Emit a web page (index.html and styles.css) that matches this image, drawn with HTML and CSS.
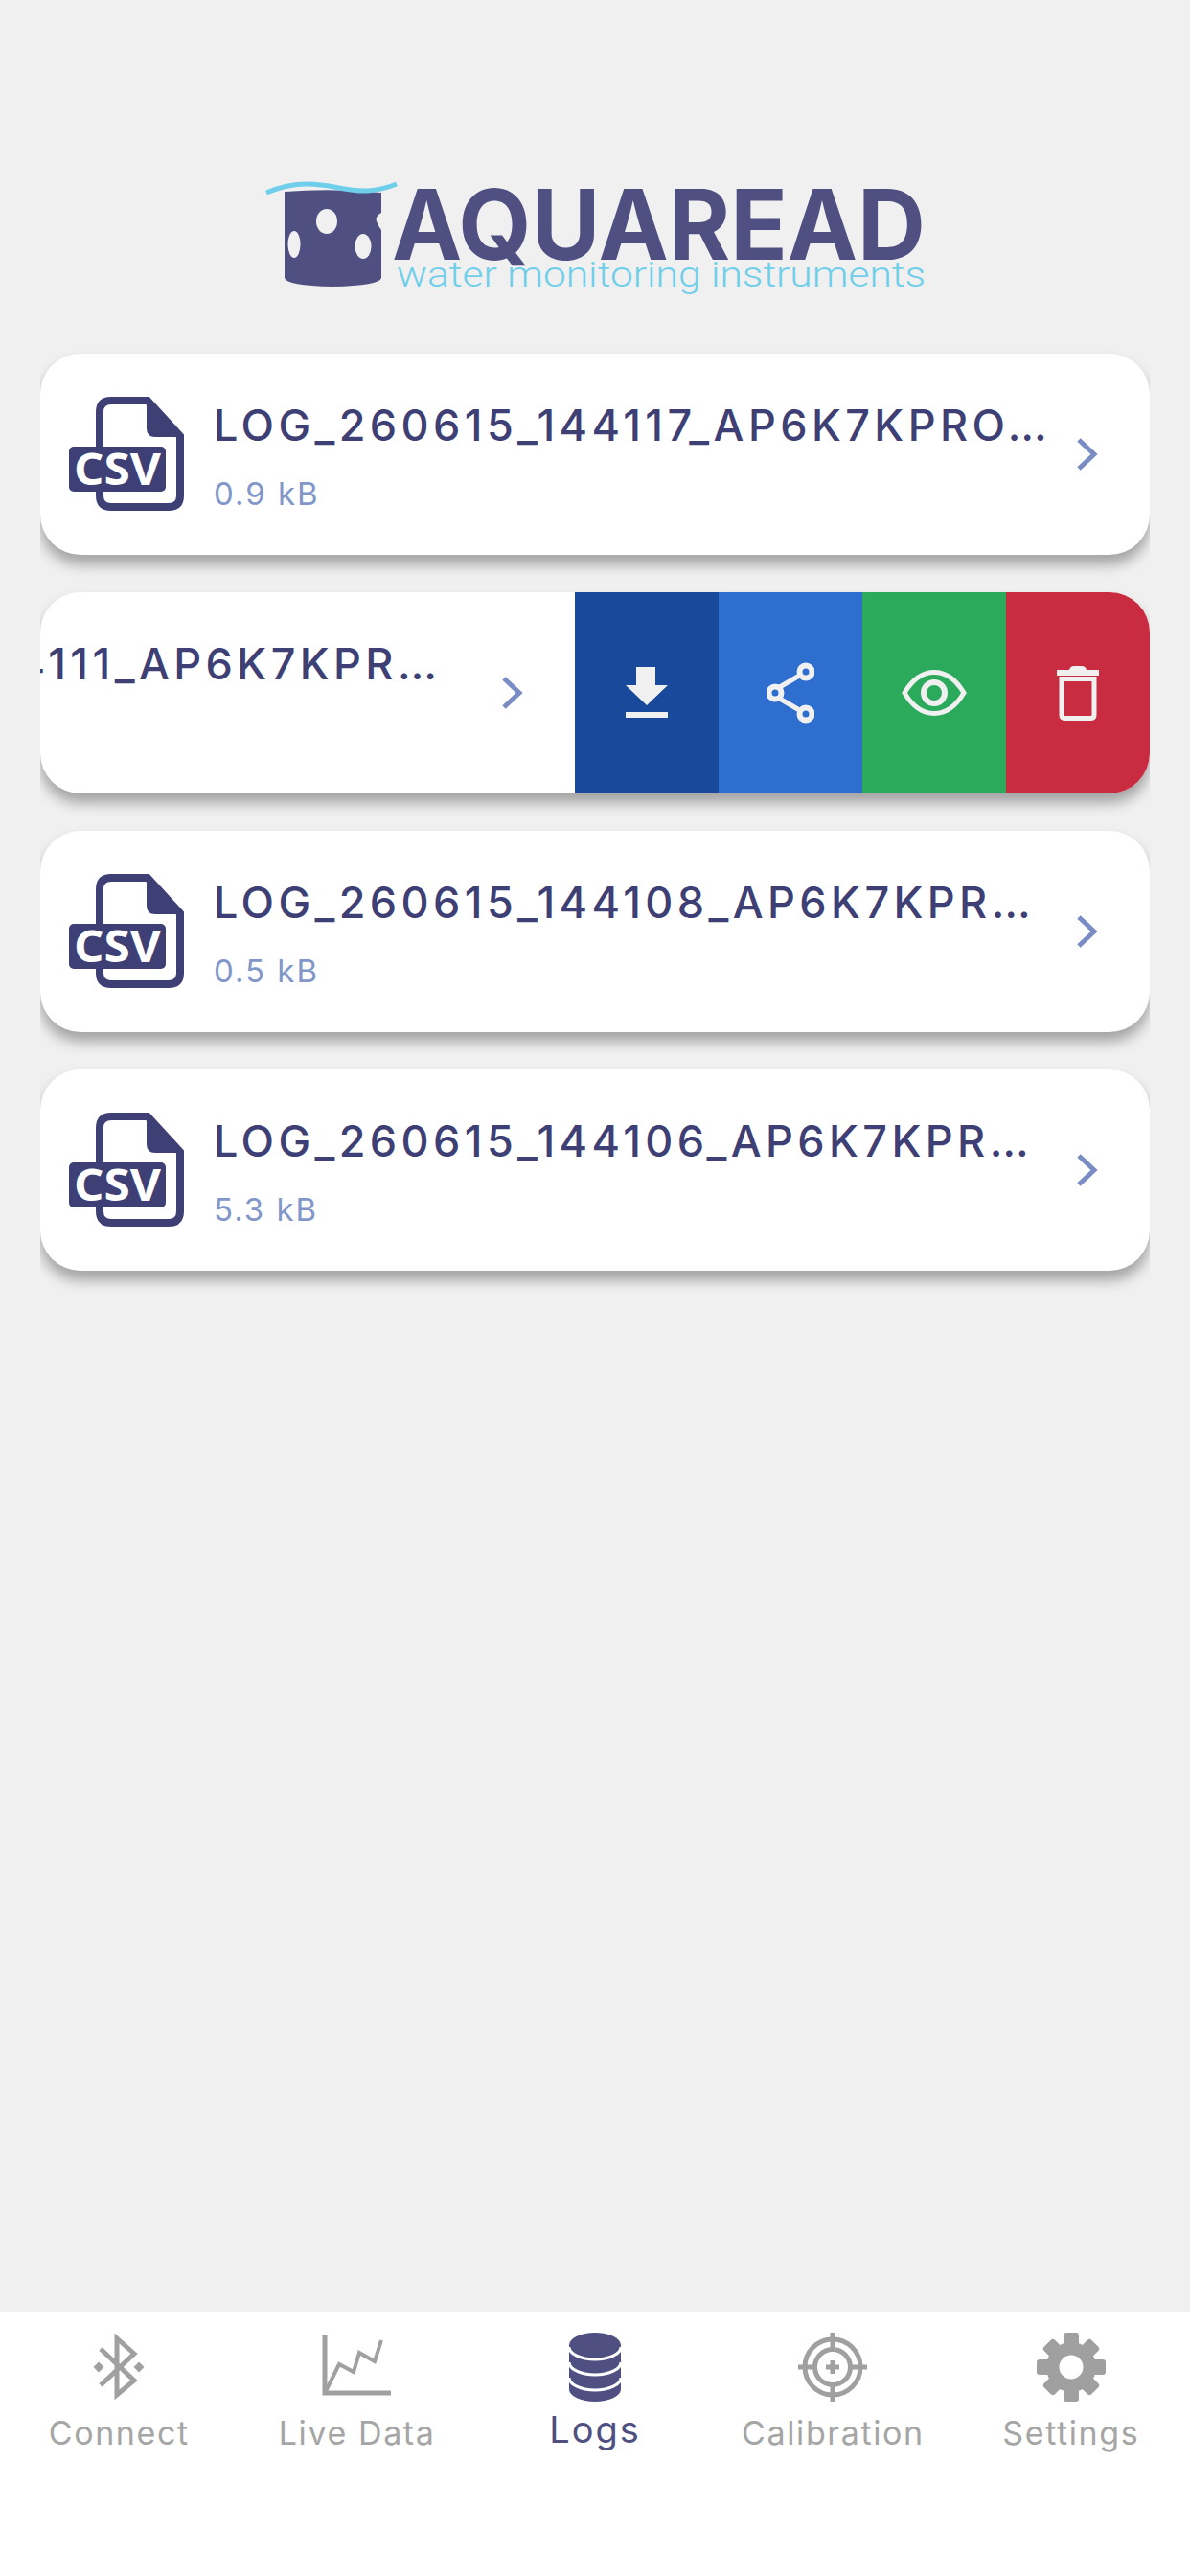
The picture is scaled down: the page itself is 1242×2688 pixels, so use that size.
FILE: index.html
```html
<!DOCTYPE html>
<html lang="en">

<head>
    <meta charset="UTF-8">
    <meta name="viewport" content="width=device-width, initial-scale=1.0">
    <title>Logs</title>
    <link rel="stylesheet" href="styles.css">
</head>

<body>
    <svg width="0" height="0" class="defs">
        <symbol id="csv" viewBox="0 0 124 122">
            <path class="csv-line" d="M34 55V17Q34 5 46 5H84L118 42V104Q118 116 106 116H46Q34 116 34 104V98"/>
            <path class="csv-fold" d="M84 5L118 42H92Q84 42 84 34Z"/>
            <rect class="csv-tag" x="2" y="53" width="101" height="47" rx="5"/>
        </symbol>
        <symbol id="chevron" viewBox="0 0 24 38">
            <path class="chevron-line" d="M4 4L20 19L4 34"/>
        </symbol>
    </svg>

    <div class="page">
        <main class="content">
            <header class="logo-bar">
                <svg class="logo" width="700" height="125" viewBox="270 185 700 125">
                    <path class="logo-body" d="M296 200Q345 196 397 201V222Q390 226 392 231Q394 236 397 240V290Q395 298 346 299Q298 298 296 290Z"/>
                    <ellipse class="logo-hole" cx="340" cy="231" rx="11" ry="13"/>
                    <ellipse class="logo-hole" cx="306" cy="255" rx="6.5" ry="14"/>
                    <ellipse class="logo-hole" cx="378" cy="257" rx="8.5" ry="13"/>
                    <path class="logo-wave" d="M277 201Q298 192 320 192C345 192 360 200 383 199Q398 198 413 192"/>
                    <text class="logo-name" x="408" y="271" textLength="557" lengthAdjust="spacingAndGlyphs">AQUAREAD</text>
                    <text class="logo-tag" x="413" y="299" textLength="552" lengthAdjust="spacingAndGlyphs">water monitoring instruments</text>
                </svg>
            </header>

            <div class="log-list">
                <div class="log-card">
                    <div class="log-row">
                        <svg class="csv-icon" viewBox="0 0 124 122">
                            <use href="#csv"/>
                            <text class="csv-text" x="7" y="93" textLength="91" lengthAdjust="spacingAndGlyphs">CSV</text>
                        </svg>
                        <div class="log-info">
                            <div class="log-name">LOG_260615_144117_AP6K7KPRO_0001.csv</div>
                            <div class="log-size">0.9 kB</div>
                        </div>
                        <svg class="chevron"><use href="#chevron"/></svg>
                    </div>
                </div>

                <div class="log-card swipe">
                    <div class="log-row swiped">
                        <svg class="csv-icon" viewBox="0 0 124 122">
                            <use href="#csv"/>
                            <text class="csv-text" x="7" y="93" textLength="91" lengthAdjust="spacingAndGlyphs">CSV</text>
                        </svg>
                        <div class="log-info">
                            <div class="log-name">LOG_260615_144111_AP6K7KPRO_0001.csv</div>
                            <div class="log-size">0.7 kB</div>
                        </div>
                        <svg class="chevron"><use href="#chevron"/></svg>
                    </div>
                    <div class="log-actions">
                        <button class="action download" aria-label="Download">
                            <svg width="44" height="54" viewBox="0 0 44 54">
                                <path class="solid" d="M11 0H31V19H44L22 40L0 19H11Z"/>
                                <rect class="solid" x="0" y="47" width="44" height="6"/>
                            </svg>
                        </button>
                        <button class="action share" aria-label="Share">
                            <svg width="50" height="64" viewBox="0 0 50 64">
                                <path class="line" d="M12 27L36 13M12 37L36 51"/>
                                <circle class="ring" cx="9" cy="32" r="6.5"/>
                                <circle class="ring" cx="41" cy="10" r="6.5"/>
                                <circle class="ring" cx="41" cy="54" r="6.5"/>
                            </svg>
                        </button>
                        <button class="action view" aria-label="View">
                            <svg width="68" height="48" viewBox="0 0 68 48">
                                <path class="line" d="M3 24C12 9 23 2.500 34 2.500S56 9 65 24C56 39 45 45.500 34 45.500S12 39 3 24Z"/>
                                <circle class="ring" cx="34" cy="24" r="11"/>
                            </svg>
                        </button>
                        <button class="action remove" aria-label="Delete">
                            <svg width="44" height="58" viewBox="0 0 44 58">
                                <path class="solid" d="M0 5H13Q14 1 18 1H26Q30 1 31 5H44V11H0Z"/>
                                <path class="line" d="M5 14.500H39V52Q39 55.500 35 55.500H9Q5 55.500 5 52Z"/>
                            </svg>
                        </button>
                    </div>
                </div>

                <div class="log-card">
                    <div class="log-row">
                        <svg class="csv-icon" viewBox="0 0 124 122">
                            <use href="#csv"/>
                            <text class="csv-text" x="7" y="93" textLength="91" lengthAdjust="spacingAndGlyphs">CSV</text>
                        </svg>
                        <div class="log-info">
                            <div class="log-name">LOG_260615_144108_AP6K7KPRO_0001.csv</div>
                            <div class="log-size">0.5 kB</div>
                        </div>
                        <svg class="chevron"><use href="#chevron"/></svg>
                    </div>
                </div>

                <div class="log-card">
                    <div class="log-row">
                        <svg class="csv-icon" viewBox="0 0 124 122">
                            <use href="#csv"/>
                            <text class="csv-text" x="7" y="93" textLength="91" lengthAdjust="spacingAndGlyphs">CSV</text>
                        </svg>
                        <div class="log-info">
                            <div class="log-name">LOG_260615_144106_AP6K7KPRO_0001.csv</div>
                            <div class="log-size">5.3 kB</div>
                        </div>
                        <svg class="chevron"><use href="#chevron"/></svg>
                    </div>
                </div>
            </div>
        </main>

        <nav class="tab-bar">
            <a class="tab">
                <svg class="tab-icon" width="64" height="72" viewBox="0 0 64 70">
                    <path class="tab-line" d="M13 16L48 49L30 64V5L48 21L13 54"/>
                    <path class="tab-fill" d="M11 29.500L16.500 35L11 40.500L5.500 35ZM53 29.500L58.500 35L53 40.500L47.500 35Z"/>
                </svg>
                <span class="tab-label">Connect</span>
            </a>
            <a class="tab">
                <svg class="tab-icon" width="76" height="72" viewBox="0 0 76 72">
                    <path class="tab-line" d="M4 3V63H73"/>
                    <path class="tab-line thin" d="M4 63L19 33L34 41L40 21L56 30L63 8"/>
                </svg>
                <span class="tab-label">Live Data</span>
            </a>
            <a class="tab active">
                <svg class="tab-icon" width="54" height="72" viewBox="0 0 54 72">
                    <path class="tab-fill" d="M0 13A27 13 0 0 1 54 13V59A27 13 0 0 1 0 59Z"/>
                    <path class="db-gap" d="M0 15A27 13 0 0 0 54 15M0 31A27 13 0 0 0 54 31M0 47A27 13 0 0 0 54 47"/>
                </svg>
                <span class="tab-label">Logs</span>
            </a>
            <a class="tab">
                <svg class="tab-icon" width="72" height="72" viewBox="0 0 72 72">
                    <circle class="tab-line" cx="36" cy="36" r="29"/>
                    <circle class="tab-line" cx="36" cy="36" r="18.500"/>
                    <path class="tab-line" d="M36 0V17M36 55V72M0 36H17M55 36H72"/>
                    <path class="tab-line" d="M29 36H43M36 29V43"/>
                </svg>
                <span class="tab-label">Calibration</span>
            </a>
            <a class="tab">
                <svg class="tab-icon" width="72" height="72" viewBox="0 0 72 72">
                    <circle class="tab-fill" cx="36" cy="36" r="26"/>
                    <g class="tab-fill">
                        <rect x="28" y="0" width="16" height="72" rx="3"/>
                        <rect x="0" y="28" width="72" height="16" rx="3"/>
                        <rect x="28" y="1" width="16" height="70" rx="3" transform="rotate(45 36 36)"/>
                        <rect x="28" y="1" width="16" height="70" rx="3" transform="rotate(-45 36 36)"/>
                    </g>
                    <circle class="gear-hole" cx="36" cy="36" r="12.500"/>
                </svg>
                <span class="tab-label">Settings</span>
            </a>
        </nav>
    </div>
</body>

</html>
```

FILE: styles.css
```css
body {
    margin: 0;
    padding: 0;
    background: #f0f0f0;
    font-family: Inter, "Liberation Sans", sans-serif;
}

.defs {
    display: block;
    height: 0;
}

.page {
    height: 2688px;
    display: flex;
    flex-direction: column;
}

.content {
    flex: 1;
    padding: 185px 42px 0;
}

/* logo */
.logo-bar {
    display: flex;
    justify-content: center;
    margin-bottom: 59px;
}

.logo {
    display: block;
}

.logo-body {
    fill: #4f5081;
}

.logo-hole {
    fill: #f0f0f0;
}

.logo-wave {
    fill: none;
    stroke: #6fcfea;
    stroke-width: 5;
}

.logo-name {
    fill: #4f5081;
    font-family: Inter, sans-serif;
    font-weight: 700;
    font-size: 102px;
}

.logo-tag {
    fill: #6fcfea;
    font-family: Roboto, sans-serif;
    font-weight: 300;
    font-size: 36px;
}

/* log cards */
.log-list {
    display: flex;
    flex-direction: column;
    gap: 39px;
}

.log-card {
    display: flex;
    height: 210px;
    background: #fff;
    border-radius: 42px;
    box-shadow: 0 10px 14px rgba(0, 0, 0, 0.32);
    clip-path: inset(-30px 0);
}

.log-card.swipe {
    overflow: hidden;
}

.log-row {
    flex: 0 0 100%;
    min-width: 0;
    box-sizing: border-box;
    display: flex;
    align-items: center;
    padding: 3px 54px 0 28px;
}

.log-row.swiped {
    margin-left: -600px;
}

.log-row.swiped .log-info {
    margin-right: 40px;
}

.csv-icon {
    flex: none;
    width: 124px;
    height: 122px;
    margin-top: -3px;
    margin-right: 29px;
}

.csv-line {
    fill: none;
    stroke: #3d3f75;
    stroke-width: 8;
}

.csv-fold {
    fill: #3d3f75;
    stroke: #3d3f75;
    stroke-width: 2;
}

.csv-tag {
    fill: #3d3f75;
}

.csv-text {
    fill: #fff;
    font-family: "Open Sans", sans-serif;
    font-weight: 700;
    font-size: 46px;
}

.log-info {
    flex: 1;
    min-width: 0;
    margin-right: 22px;
}

.log-name {
    color: #3d3f75;
    font-size: 45px;
    font-weight: 500;
    letter-spacing: 4.4px;
    line-height: 54px;
    white-space: nowrap;
    overflow: hidden;
    text-overflow: ellipsis;
}

.log-size {
    margin-top: 24px;
    color: #8297c9;
    font-size: 33px;
    letter-spacing: 2px;
    line-height: 40px;
}

.chevron {
    flex: none;
    width: 24px;
    height: 38px;
    margin-top: -3px;
}

.chevron-line {
    fill: none;
    stroke: #7a8cc4;
    stroke-width: 5;
}

/* swipe actions */
.log-actions {
    flex: 0 0 600px;
    display: flex;
}

.action {
    flex: 1;
    display: flex;
    align-items: center;
    justify-content: center;
    border: none;
    padding: 0;
}

.action.download {
    background: #19499b;
}

.action.share {
    background: #2d6ecf;
}

.action.view {
    background: #2caa5b;
}

.action.remove {
    background: #c92c40;
}

.action .solid {
    fill: #f0f0f0;
}

.action .line {
    fill: none;
    stroke: #f0f0f0;
    stroke-width: 5;
}

.action .ring {
    fill: none;
    stroke: #f0f0f0;
    stroke-width: 6;
}

/* bottom tabs */
.tab-bar {
    flex: none;
    height: 276px;
    box-sizing: border-box;
    padding-top: 22px;
    display: grid;
    grid-template-columns: repeat(5, 1fr);
    background: #fff;
}

.tab {
    display: flex;
    flex-direction: column;
    align-items: center;
    color: #a5a5a5;
}

.tab-icon {
    display: block;
    height: 72px;
}

.tab-label {
    margin-top: 12px;
    font-size: 34px;
    letter-spacing: 1.6px;
    line-height: 42px;
}

.tab-line {
    fill: none;
    stroke: #a0a0a0;
    stroke-width: 5;
}

.tab-line.thin {
    stroke-width: 4;
}

.tab-fill {
    fill: #a0a0a0;
}

.gear-hole {
    fill: #fff;
}

.db-gap {
    fill: none;
    stroke: #fff;
    stroke-width: 3;
}

.tab.active {
    color: #4f5081;
}

.tab.active .tab-fill {
    fill: #4f5081;
}

.tab.active .tab-label {
    margin-top: 6px;
    font-size: 38px;
    letter-spacing: 2px;
    line-height: 46px;
}
```
